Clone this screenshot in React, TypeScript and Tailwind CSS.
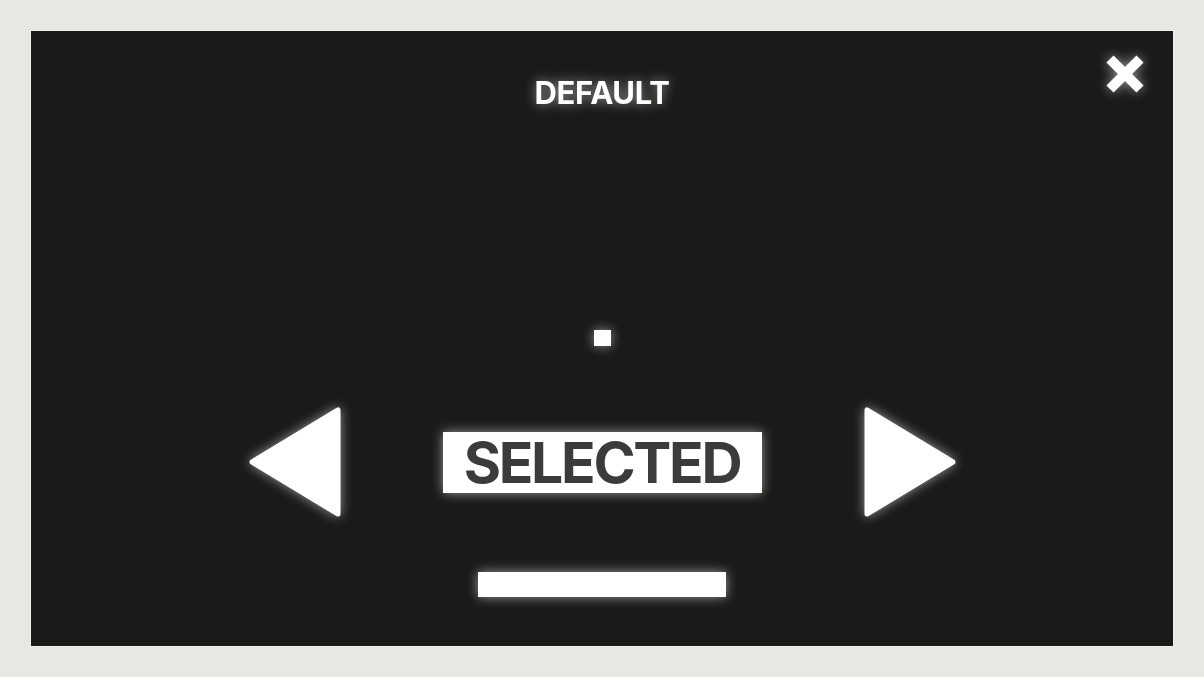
import React from 'react';

const glow = 'drop-shadow-[0_0_6px_rgba(255,255,255,0.55)]';

function Triangle({ dir }: { dir: 'left' | 'right' }) {
  const pts = dir === 'left' ? '89,3 89,107 3,55' : '3,3 3,107 89,55';
  return (
    <svg width="92" height="110" viewBox="0 0 92 110" className={glow}>
      <polygon points={pts} fill="#ffffff" stroke="#ffffff" strokeWidth="5" strokeLinejoin="round" />
    </svg>
  );
}

export default function App() {
  return (
    <div className="h-screen w-full bg-[#e7e7e3] p-[31px] flex">
      <div className="relative flex-1 flex flex-col items-center bg-[#1a1b18] ring-1 ring-[#f4f4f0]/70">
        {/* Title */}
        <div
          className={`mt-[46px] h-[30px] flex items-center text-[31px] leading-none font-bold text-white tracking-[-0.01em] ${glow}`}
          style={{ fontFamily: 'Inter, "Noto Sans", sans-serif' }}
        >
          DEFAULT
        </div>

        {/* Close */}
        <button className={`absolute top-[22px] right-[28px] ${glow}`}>
          <svg width="40" height="42" viewBox="0 0 40 42">
            <path d="M5 6 L35 36 M35 6 L5 36" stroke="#ffffff" strokeWidth="10" strokeLinecap="butt" />
          </svg>
        </button>

        {/* Indicator */}
        <div className={`mt-[223px] w-[17px] h-[16px] bg-white ${glow}`} />

        {/* Selector */}
        <div className="mt-[61px] flex items-center gap-[102px]">
          <Triangle dir="left" />
          <div className={`w-[319px] h-[61px] bg-white flex items-center justify-center ${glow}`}>
            <span
              className="text-[57px] leading-none font-bold text-[#3b3b3a] tracking-[-0.04em]"
              style={{ fontFamily: 'Inter, "Noto Sans", sans-serif' }}
            >
              SELECTED
            </span>
          </div>
          <Triangle dir="right" />
        </div>

        {/* Bar */}
        <div className={`mt-[55px] w-[248px] h-[25px] bg-white ${glow}`} />
      </div>
    </div>
  );
}
